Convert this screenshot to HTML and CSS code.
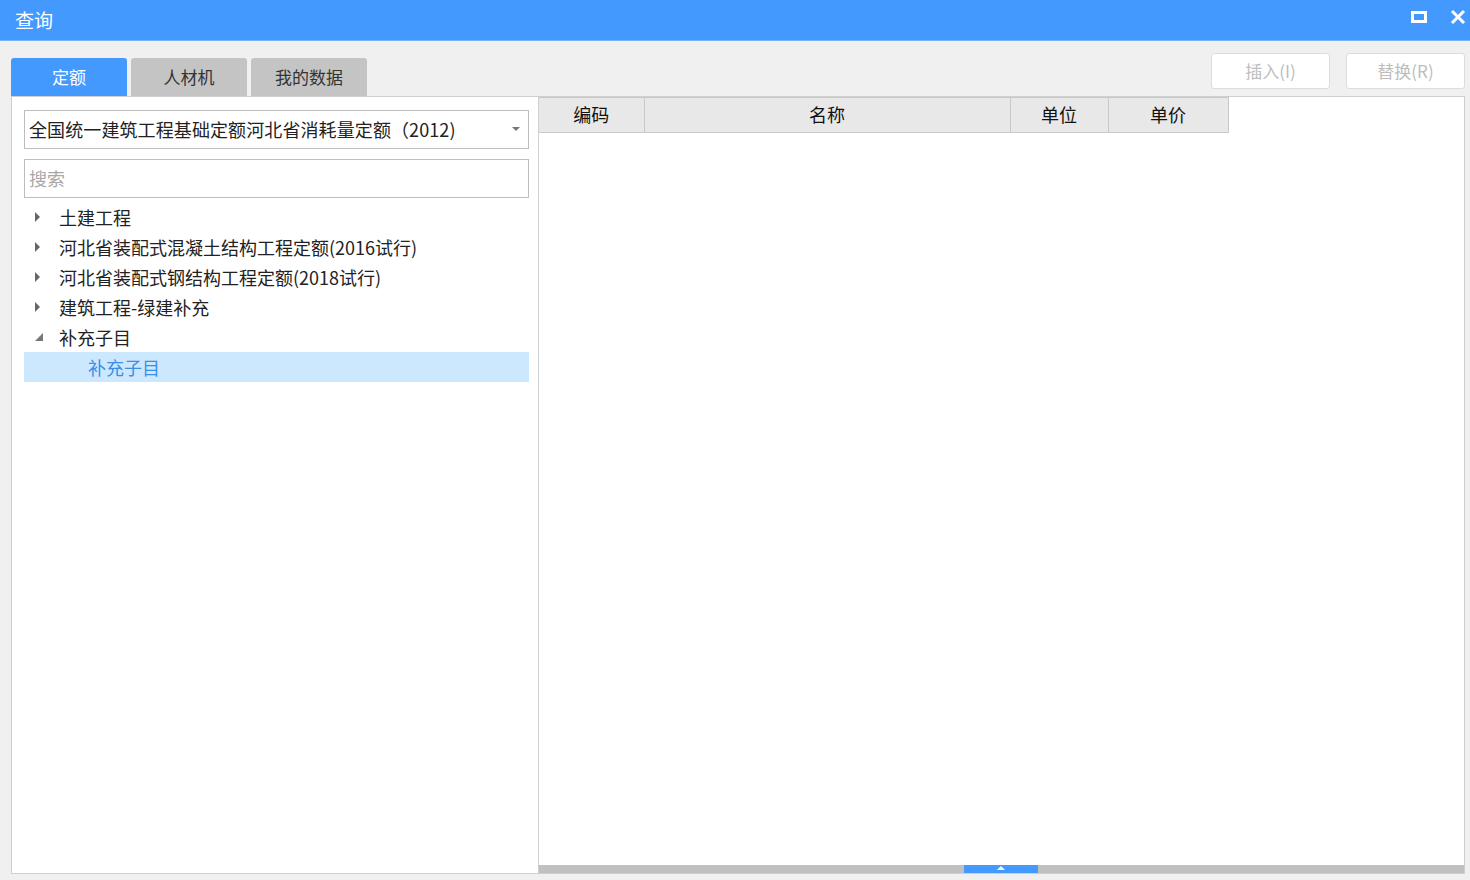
FILE: index.html
```html
<!DOCTYPE html>
<html lang="zh-CN">
<head>
    <meta charset="UTF-8">
    <title>查询</title>
    <link rel="stylesheet" href="styles.css">
</head>
<body>
<div class="titlebar">
    <span class="title">查询</span>
    <div class="win-btns">
        <svg class="win-icon" width="16" height="14" viewBox="0 0 16 14">
            <rect x="1.5" y="2.5" width="13" height="9" fill="none" stroke="#fff" stroke-width="3"/>
        </svg>
        <svg class="win-icon" width="16" height="16" viewBox="0 0 16 16">
            <path d="M2 2 L14 14 M14 2 L2 14" stroke="#fff" stroke-width="3"/>
        </svg>
    </div>
</div>

<div class="main">
    <div class="toolbar">
        <div class="tabs">
            <span class="tab on">定额</span>
            <span class="tab">人材机</span>
            <span class="tab">我的数据</span>
        </div>
        <div class="actions">
            <button class="btn" disabled>插入(I)</button>
            <button class="btn" disabled>替换(R)</button>
        </div>
    </div>

    <div class="panels">
        <div class="left">
            <div class="combo">
                <span>全国统一建筑工程基础定额河北省消耗量定额（2012)</span>
                <span class="caret"></span>
            </div>
            <input class="search" type="text" placeholder="搜索">
            <ul class="tree">
                <li><span class="arrow"></span>土建工程</li>
                <li><span class="arrow"></span>河北省装配式混凝土结构工程定额(2016试行)</li>
                <li><span class="arrow"></span>河北省装配式钢结构工程定额(2018试行)</li>
                <li><span class="arrow"></span>建筑工程-绿建补充</li>
                <li><span class="arrow open"></span>补充子目</li>
                <li class="child on">补充子目</li>
            </ul>
        </div>

        <div class="right">
            <div class="grid">
                <table>
                    <tr>
                        <th class="c-code">编码</th>
                        <th class="c-name">名称</th>
                        <th class="c-unit">单位</th>
                        <th class="c-price">单价</th>
                    </tr>
                </table>
            </div>
            <div class="hscroll">
                <span class="thumb"></span>
            </div>
        </div>
    </div>
</div>
</body>
</html>
```

FILE: styles.css
```css
*{
    margin: 0;
    padding: 0;
    box-sizing: border-box;
}
body{
    width: 1470px;
    height: 880px;
    overflow: hidden;
    background-color: #f0f0f0;
    font-family: "Noto Sans CJK SC", "Liberation Sans", sans-serif;
    font-size: 18px;
    color: #222;
}
ul{
    list-style: none;
}

/* 标题栏 */
.titlebar{
    height: 41px;
    background-color: #4499ff;
    border-bottom: 1px solid #7ab4ff;
    display: flex;
    align-items: center;
    justify-content: space-between;
    padding: 0 4px 0 15px;
}
.titlebar .title{
    color: #fff;
    font-size: 19px;
    line-height: 1;
    margin-top: -1px;
}
.win-btns{
    display: flex;
    align-items: center;
    gap: 23px;
    margin-top: -6px;
}

.main{
    padding: 0 5px 0 11px;
}

/* 页签 + 按钮 */
.toolbar{
    height: 55px;
    display: flex;
    justify-content: space-between;
}
.tabs{
    display: flex;
    align-items: flex-end;
    gap: 4px;
}
.tab{
    width: 116px;
    height: 38px;
    line-height: 38px;
    text-align: center;
    background-color: #c4c4c4;
    border-radius: 3px 3px 0 0;
    color: #333;
    font-size: 17px;
}
.tab.on{
    background-color: #4499ff;
    color: #fff;
}
.actions{
    display: flex;
    gap: 16px;
    padding-top: 12px;
}
.btn{
    width: 119px;
    height: 36px;
    background-color: #fff;
    border: 1px solid #dcdcdc;
    border-radius: 3px;
    font-family: inherit;
    font-size: 17px;
    color: #bdbdbd;
    padding-bottom: 2px;
}

/* 左右面板 */
.panels{
    display: flex;
    height: 778px;
}
.left{
    width: 527px;
    background-color: #fff;
    border: 1px solid #cfcfcf;
    border-right: none;
    padding: 13px 9px 0 12px;
}
.combo{
    height: 39px;
    border: 1px solid #bdbdbd;
    display: flex;
    align-items: center;
    justify-content: space-between;
    padding: 0 8px 2px 4px;
    font-size: 18px;
    letter-spacing: 0.1px;
}
.caret{
    width: 0;
    height: 0;
    border-left: 4px solid transparent;
    border-right: 4px solid transparent;
    border-top: 4px solid #777;
}
.search{
    display: block;
    width: 100%;
    height: 39px;
    margin-top: 10px;
    border: 1px solid #bdbdbd;
    padding: 0 4px 2px;
    font-family: inherit;
    font-size: 18px;
    outline: none;
}
.search::placeholder{
    color: #a8a8a8;
}
.tree{
    margin-top: 4px;
}
.tree li{
    height: 30px;
    line-height: 30px;
    display: flex;
    align-items: center;
    font-size: 18px;
    color: #222;
}
.arrow{
    width: 0;
    height: 0;
    margin: 0 19px 0 11px;
    border-top: 5px solid transparent;
    border-bottom: 5px solid transparent;
    border-left: 5px solid #666;
}
.arrow.open{
    border-top: none;
    border-left: 8px solid transparent;
    border-bottom: 8px solid #777;
    margin: 0 16px 0 11px;
}
.tree li.child{
    padding-left: 64px;
}
.tree li.on{
    background-color: #cce8ff;
    color: #3a8ee6;
}

.right{
    width: 927px;
    background-color: #fff;
    border: 1px solid #cfcfcf;
    display: flex;
    flex-direction: column;
}
.grid{
    flex: 1;
}
table{
    border-collapse: collapse;
}
th{
    height: 35px;
    background-color: #e8e8e8;
    border: 1px solid #c8c8c8;
    border-left: none;
    font-weight: normal;
    font-size: 18px;
    color: #111;
    padding-bottom: 2px;
}
.c-code{ width: 105px; }
.c-name{ width: 366px; }
.c-unit{ width: 98px; }
.c-price{ width: 120px; }

.hscroll{
    height: 8px;
    background-color: #c0c0c0;
    display: flex;
    justify-content: center;
    padding-right: 1px;
}
.thumb{
    width: 74px;
    height: 8px;
    background-color: #4499ff;
    position: relative;
}
.thumb::after{
    content: "";
    position: absolute;
    left: 33px;
    top: 1px;
    border-left: 4px solid transparent;
    border-right: 4px solid transparent;
    border-bottom: 4px solid #fff;
}
```
